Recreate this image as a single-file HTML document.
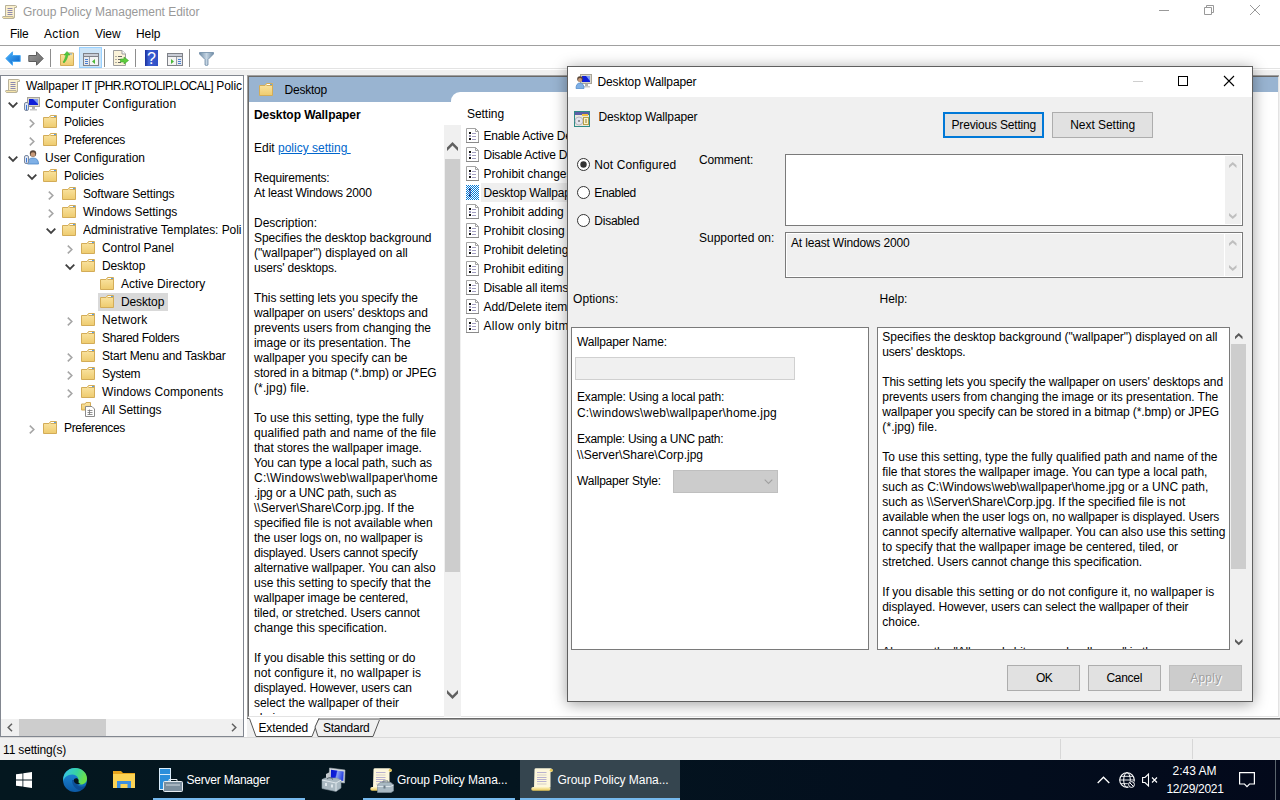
<!DOCTYPE html><html><head><meta charset="utf-8"><title>Group Policy Management Editor</title><style>
*{box-sizing:border-box;margin:0;padding:0}
html,body{width:1280px;height:800px;overflow:hidden;background:#fff}
body{font-family:"Liberation Sans",sans-serif;font-size:12px;color:#000;position:relative}
.a{position:absolute}
.t{position:absolute;white-space:nowrap;line-height:18px;height:18px}
.p{position:absolute;line-height:15px}
svg{position:absolute;overflow:visible}
</style></head><body>
<svg width="0" height="0" style="left:0;top:0"><defs>
<linearGradient id="fg" x1="0" y1="0" x2="0" y2="1"><stop offset="0" stop-color="#fbe6a6"/><stop offset="1" stop-color="#eecb6e"/></linearGradient>
<symbol id="folder" viewBox="0 0 14 13"><path d="M0.5 2.5 H6 L7.5 0.5 H13.5 V12.5 H0.5 Z" fill="url(#fg)" stroke="#d3ac58" stroke-width="1"/><path d="M7.5 2.5 H13" stroke="#d3ac58" fill="none"/><rect x="8" y="1" width="3" height="1" fill="#fff"/><rect x="11" y="1" width="2" height="1" fill="#5aa0e6"/></symbol>
<symbol id="scroll" viewBox="0 0 16 16"><path d="M3.5 1.5 H13.5 Q15 1.5 14.5 3.5 H12.5 V13 Q12.5 14.5 11 14.5 H1.5 Q0.5 14.5 0.8 12.5 H3.5 Z" fill="#fbf0cc" stroke="#b9b29a" stroke-width="1"/><path d="M1 12.5 H11 Q11.5 13.5 11 14.5 H1.5" fill="#f6e4a8" stroke="#b9b29a"/><path d="M5.5 4.5H10.5M5.5 6.5H10.5M5.5 8.5H10.5M5.5 10.5H10.5" stroke="#8d89b0"/></symbol>
<linearGradient id="rl" x1="0" y1="0" x2="0" y2="1"><stop offset="0" stop-color="#fff6c8"/><stop offset="1" stop-color="#e6c655"/></linearGradient>
<symbol id="scrollbig" viewBox="0 0 22 23"><path d="M3.500 1.500 Q3.500 0.300 5 0.300 H19.500 Q21.800 0.500 21.700 2.500 Q21.600 4.300 19.500 4.300 V19.500 H3 Z" fill="#fdf7dc"/><circle cx="20.300" cy="2.300" r="1.500" fill="#e6c655"/><rect x="0.300" y="19" width="19.200" height="3.700" rx="1.700" fill="url(#rl)"/><path d="M6 4.500H15.500M6 9.500H15.500M6 11.500H15.500M6 13.500H15.500" stroke="#b9b2cf"/><path d="M6 6.500H15.500M6 7.500H15.500M6 15.500H15.500M6 16.500H15.500" stroke="#e9e3d2"/></symbol>
<symbol id="setting" viewBox="0 0 13 15"><path d="M0.5 0.5 H9.5 L12.5 3.5 V14.5 H0.5 Z" fill="#fff" stroke="#a3a3a3"/><path d="M9.5 0.5 V3.5 H12.5" fill="none" stroke="#a3a3a3"/><path d="M0 14.5 H13" stroke="#8a8a8a"/><rect x="3" y="4" width="2" height="2" fill="#111"/><rect x="3" y="7" width="2" height="2" fill="#9a97b8"/><rect x="3" y="10" width="2" height="2" fill="#111"/><path d="M6 5.5H10M6 8.5H10M6 11.5H10" stroke="#a29ec2"/></symbol>
</defs></svg>
<svg style="left:2px;top:4px" width="16" height="16"><use href="#scroll"/></svg>
<div class="t" style="left:23px;top:3px;letter-spacing:-0.009px;color:#999">Group Policy Management Editor</div>
<svg style="left:1159px;top:10px" width="10" height="1"><rect width="10" height="1" fill="#999"/></svg>
<svg style="left:1204px;top:5px" width="10" height="10" viewBox="0 0 10 10"><path d="M0.5 2.5H7.5V9.5H0.5Z M2.5 2.5V0.5H9.5V7.5H7.5" fill="none" stroke="#999"/></svg>
<svg style="left:1250px;top:5px" width="10" height="10" viewBox="0 0 10 10"><path d="M0 0L10 10M10 0L0 10" stroke="#999" stroke-width="1"/></svg>
<div class="t" style="left:10px;top:25px;letter-spacing:-0.211px;">File</div>
<div class="t" style="left:44px;top:25px;letter-spacing:0.357px;">Action</div>
<div class="t" style="left:95px;top:25px;letter-spacing:-0.074px;">View</div>
<div class="t" style="left:136px;top:25px;letter-spacing:-0.047px;">Help</div>
<div class="a" style="left:0px;top:45px;width:1280px;height:1px;background:#a0a0a0;"></div>
<div class="a" style="left:0px;top:69px;width:1280px;height:7px;background:#f0f0f0;"></div>
<div class="a" style="left:0px;top:69px;width:1280px;height:1px;background:#fff;"></div>
<div class="a" style="left:0px;top:68px;width:1280px;height:1px;background:#e3e3e3;"></div>
<svg style="left:5px;top:51px" width="16" height="15" viewBox="0 0 16 15"><defs><linearGradient id="bl" x1="0" y1="0" x2="1" y2="1"><stop offset="0" stop-color="#49b6ff"/><stop offset="1" stop-color="#0a5ec4"/></linearGradient><linearGradient id="gr" x1="0" y1="0" x2="1" y2="1"><stop offset="0" stop-color="#9a9a9a"/><stop offset="1" stop-color="#6a6a6a"/></linearGradient></defs><path d="M7.5 0.8 L0.8 7.5 L7.5 14.2 V10.5 H15.2 V4.5 H7.5 Z" fill="url(#bl)" stroke="#4aa8f2" stroke-width="1"/></svg>
<svg style="left:28px;top:51px" width="16" height="15" viewBox="0 0 16 15"><path d="M8.5 0.8 L15.2 7.5 L8.5 14.2 V10.5 H0.8 V4.5 H8.5 Z" fill="url(#gr)" stroke="#5c5c5c" stroke-width="1"/></svg>
<div class="a" style="left:50px;top:49px;width:1px;height:18px;background:#8d8d8d;"></div>
<div class="a" style="left:104px;top:49px;width:1px;height:18px;background:#8d8d8d;"></div>
<div class="a" style="left:135px;top:49px;width:1px;height:18px;background:#8d8d8d;"></div>
<div class="a" style="left:189px;top:49px;width:1px;height:18px;background:#8d8d8d;"></div>
<svg style="left:60px;top:51px" width="15" height="15" viewBox="0 0 15 15"><path d="M0.5 3.5 H6 L7.5 2 H13.5 V14.5 H0.5 Z" fill="url(#fg)" stroke="#d3ac58"/><rect x="9" y="2.5" width="3" height="1" fill="#6aa8e8"/><path d="M3 11 C5 9 5 6 6 4 L4 4 L7 0.5 L10 4 L8 4 C7.5 7 6 10 4 12 Z" fill="#4fc83c" stroke="#3aa82a" stroke-width="0.5"/></svg>
<div class="a" style="left:79px;top:47px;width:23px;height:21px;background:#cce4f7;border:1px solid #99d1ff"></div>
<svg style="left:83px;top:53px" width="16" height="13" viewBox="0 0 16 13"><rect x="0.5" y="0.5" width="15" height="12" fill="#f4f4f4" stroke="#7f8289"/><rect x="1" y="1" width="14" height="2" fill="#c9cdd6"/><path d="M1 3.5H15" stroke="#7f8289"/><rect x="1" y="4" width="5" height="8" fill="#e6e9ef"/><path d="M6.5 4V12" stroke="#9a9da5"/><path d="M2 6.5H5M2 8.5H5M2 10.5H5" stroke="#4a7fd0"/><path d="M12 6 L9 8.5 L12 11 Z" fill="#4ab83a"/></svg>
<svg style="left:113px;top:50px" width="16" height="16" viewBox="0 0 16 16"><path d="M0.5 0.5 H9 L12.5 4 V15.5 H0.5 Z" fill="#fbf3d9" stroke="#9d9d9d"/><path d="M9 0.5 V4 H12.5" fill="#fff" stroke="#9d9d9d"/><path d="M2.5 6.5H3.5M5 6.5H9M2.5 9.5H3.5M5 9.5H8M2.5 12.5H3.5M5 12.5H8" stroke="#666"/><path d="M7.5 9 H11 V7 L15.5 10.5 L11 14 V12 H7.5 Z" fill="#5ccc3c" stroke="#3da62a" stroke-width="0.6"/></svg>
<svg style="left:145px;top:50px" width="13" height="16" viewBox="0 0 13 16"><defs><linearGradient id="hb" x1="0" y1="0" x2="1" y2="0"><stop offset="0" stop-color="#1a2f9c"/><stop offset="0.3" stop-color="#3c5fd4"/><stop offset="1" stop-color="#2f4fc4"/></linearGradient></defs><rect x="0" y="0" width="13" height="16" fill="url(#hb)"/><text x="6.500" y="13.500" font-size="16" fill="#fff" text-anchor="middle" font-family="Liberation Sans, sans-serif">?</text></svg>
<svg style="left:167px;top:53px" width="16" height="13" viewBox="0 0 16 13"><rect x="0.5" y="0.5" width="15" height="12" fill="#f4f4f4" stroke="#7f8289"/><rect x="1" y="1" width="14" height="2" fill="#c9cdd6"/><path d="M1 3.5H15" stroke="#7f8289"/><rect x="10" y="4" width="5" height="8" fill="#e6e9ef"/><path d="M9.5 4V12" stroke="#9a9da5"/><path d="M11 6.5H14M11 8.5H14M11 10.5H14" stroke="#4a7fd0"/><path d="M4 6 L7 8.5 L4 11 Z" fill="#4ab83a"/></svg>
<svg style="left:199px;top:52px" width="15" height="14" viewBox="0 0 15 14"><defs><linearGradient id="fl" x1="0" y1="0" x2="1" y2="0"><stop offset="0" stop-color="#6f8ca6"/><stop offset="0.5" stop-color="#c5d5e3"/><stop offset="1" stop-color="#6f8ca6"/></linearGradient></defs><path d="M0.5 0.5 H14.5 V2 L9 7.5 V13 Q7.5 14 6 13 V7.5 L0.5 2 Z" fill="url(#fl)" stroke="#6f8ca6" stroke-width="0.8"/></svg>
<div class="a" style="left:0px;top:75px;width:244px;height:662px;background:#fff;border:1px solid #828790"></div>
<svg style="left:5px;top:78px" width="16" height="16"><use href="#scroll"/></svg>
<div class="t" style="left:26px;top:77px;letter-spacing:-0.140px;">Wallpaper IT</div>
<div class="t" style="left:94.5px;top:77px;letter-spacing:-0.549px;">[PHR.ROTOLIP.LOCAL]</div>
<div class="t" style="left:216.2px;top:77px;letter-spacing:-0.023px;">Polic</div>
<svg style="left:8px;top:102px" width="10" height="6" viewBox="0 0 10 6"><path d="M0.7 0.7 L5 5 L9.3 0.7" fill="none" stroke="#404040" stroke-width="1.8"/></svg>
<svg style="left:24px;top:97px" width="16" height="15" viewBox="0 0 16 15"><rect x="3.5" y="0.5" width="12" height="9" fill="#d9d6cc" stroke="#a8a498"/><rect x="5" y="2" width="9" height="6" fill="#1020d8"/><path d="M9 2 L14 2 L14 7 Z" fill="#7f9cf0"/><rect x="8" y="10" width="3" height="2" fill="#b0b0b0"/><rect x="6" y="12" width="7" height="1.5" fill="#c8c8c8"/><rect x="0.5" y="5.500" width="4" height="8" rx="1.5" fill="#dfe6f2" stroke="#7d8aa0"/><rect x="2" y="8" width="1" height="5" fill="#3b78d8"/></svg>
<div class="t" style="left:45px;top:95px;letter-spacing:0.177px;">Computer Configuration</div>
<svg style="left:29px;top:119px" width="6" height="9" viewBox="0 0 6 9"><path d="M0.800 0.600 L4.800 4.500 L0.800 8.400" fill="none" stroke="#a6a6a6" stroke-width="1.600"/></svg>
<svg style="left:43px;top:115px" width="14" height="13"><use href="#folder"/></svg>
<div class="t" style="left:64px;top:113px;letter-spacing:-0.182px;">Policies</div>
<svg style="left:29px;top:137px" width="6" height="9" viewBox="0 0 6 9"><path d="M0.800 0.600 L4.800 4.500 L0.800 8.400" fill="none" stroke="#a6a6a6" stroke-width="1.600"/></svg>
<svg style="left:43px;top:133px" width="14" height="13"><use href="#folder"/></svg>
<div class="t" style="left:64px;top:131px;letter-spacing:-0.337px;">Preferences</div>
<svg style="left:8px;top:156px" width="10" height="6" viewBox="0 0 10 6"><path d="M0.7 0.7 L5 5 L9.3 0.7" fill="none" stroke="#404040" stroke-width="1.8"/></svg>
<svg style="left:24px;top:149px" width="16" height="16" viewBox="0 0 16 16"><circle cx="9" cy="4.500" r="3.2" fill="#5a4638"/><circle cx="9" cy="5.500" r="2.300" fill="#c99a78"/><path d="M3.5 15 Q3.5 9 9 9 Q14.500 9 14.500 15 Z" fill="#7fb0e6" stroke="#4a86c8" stroke-width="0.8"/><rect x="0.5" y="6.500" width="4" height="8" rx="1.500" fill="#dfe6f2" stroke="#7d8aa0"/><rect x="2" y="9" width="1" height="4.500" fill="#3b78d8"/></svg>
<div class="t" style="left:45px;top:149px;letter-spacing:-0.003px;">User Configuration</div>
<svg style="left:27px;top:174px" width="10" height="6" viewBox="0 0 10 6"><path d="M0.7 0.7 L5 5 L9.3 0.7" fill="none" stroke="#404040" stroke-width="1.8"/></svg>
<svg style="left:43px;top:169px" width="14" height="13"><use href="#folder"/></svg>
<div class="t" style="left:64px;top:167px;letter-spacing:-0.182px;">Policies</div>
<svg style="left:48px;top:191px" width="6" height="9" viewBox="0 0 6 9"><path d="M0.800 0.600 L4.800 4.500 L0.800 8.400" fill="none" stroke="#a6a6a6" stroke-width="1.600"/></svg>
<svg style="left:62px;top:187px" width="14" height="13"><use href="#folder"/></svg>
<div class="t" style="left:83px;top:185px;letter-spacing:-0.162px;">Software Settings</div>
<svg style="left:48px;top:209px" width="6" height="9" viewBox="0 0 6 9"><path d="M0.800 0.600 L4.800 4.500 L0.800 8.400" fill="none" stroke="#a6a6a6" stroke-width="1.600"/></svg>
<svg style="left:62px;top:205px" width="14" height="13"><use href="#folder"/></svg>
<div class="t" style="left:83px;top:203px;letter-spacing:-0.067px;">Windows Settings</div>
<svg style="left:46px;top:228px" width="10" height="6" viewBox="0 0 10 6"><path d="M0.7 0.7 L5 5 L9.3 0.7" fill="none" stroke="#404040" stroke-width="1.8"/></svg>
<svg style="left:62px;top:223px" width="14" height="13"><use href="#folder"/></svg>
<div class="t" style="left:83px;top:221px;width:160px;overflow:hidden;letter-spacing:-0.045px;">Administrative Templates: Poli</div>
<svg style="left:67px;top:245px" width="6" height="9" viewBox="0 0 6 9"><path d="M0.800 0.600 L4.800 4.500 L0.800 8.400" fill="none" stroke="#a6a6a6" stroke-width="1.600"/></svg>
<svg style="left:81px;top:241px" width="14" height="13"><use href="#folder"/></svg>
<div class="t" style="left:102px;top:239px;letter-spacing:-0.063px;">Control Panel</div>
<svg style="left:65px;top:264px" width="10" height="6" viewBox="0 0 10 6"><path d="M0.7 0.7 L5 5 L9.3 0.7" fill="none" stroke="#404040" stroke-width="1.8"/></svg>
<svg style="left:81px;top:259px" width="14" height="13"><use href="#folder"/></svg>
<div class="t" style="left:102px;top:257px;letter-spacing:-0.119px;">Desktop</div>
<svg style="left:100px;top:277px" width="14" height="13"><use href="#folder"/></svg>
<div class="t" style="left:121px;top:275px;letter-spacing:0.011px;">Active Directory</div>
<div class="a" style="left:98px;top:293px;width:70px;height:18px;background:#d9d9d9;"></div>
<svg style="left:100px;top:295px" width="14" height="13"><use href="#folder"/></svg>
<div class="t" style="left:121px;top:293px;letter-spacing:-0.119px;">Desktop</div>
<svg style="left:67px;top:317px" width="6" height="9" viewBox="0 0 6 9"><path d="M0.800 0.600 L4.800 4.500 L0.800 8.400" fill="none" stroke="#a6a6a6" stroke-width="1.600"/></svg>
<svg style="left:81px;top:313px" width="14" height="13"><use href="#folder"/></svg>
<div class="t" style="left:102px;top:311px;letter-spacing:0.198px;">Network</div>
<svg style="left:81px;top:331px" width="14" height="13"><use href="#folder"/></svg>
<div class="t" style="left:102px;top:329px;letter-spacing:-0.343px;">Shared Folders</div>
<svg style="left:67px;top:353px" width="6" height="9" viewBox="0 0 6 9"><path d="M0.800 0.600 L4.800 4.500 L0.800 8.400" fill="none" stroke="#a6a6a6" stroke-width="1.600"/></svg>
<svg style="left:81px;top:349px" width="14" height="13"><use href="#folder"/></svg>
<div class="t" style="left:102px;top:347px;letter-spacing:-0.168px;">Start Menu and Taskbar</div>
<svg style="left:67px;top:371px" width="6" height="9" viewBox="0 0 6 9"><path d="M0.800 0.600 L4.800 4.500 L0.800 8.400" fill="none" stroke="#a6a6a6" stroke-width="1.600"/></svg>
<svg style="left:81px;top:367px" width="14" height="13"><use href="#folder"/></svg>
<div class="t" style="left:102px;top:365px;letter-spacing:-0.303px;">System</div>
<svg style="left:67px;top:389px" width="6" height="9" viewBox="0 0 6 9"><path d="M0.800 0.600 L4.800 4.500 L0.800 8.400" fill="none" stroke="#a6a6a6" stroke-width="1.600"/></svg>
<svg style="left:81px;top:385px" width="14" height="13"><use href="#folder"/></svg>
<div class="t" style="left:102px;top:383px;letter-spacing:0.069px;">Windows Components</div>
<svg style="left:81px;top:402px" width="16" height="15" viewBox="0 0 16 15"><path d="M0.5 2 H4 L5 0.5 H9.500 V8 H0.5 Z" fill="url(#fg)" stroke="#d3ac58"/><path d="M4.500 4.500 H11 L13.500 7 V14.500 H4.500 Z" fill="#fff" stroke="#8a8a8a"/><path d="M6.500 8.500H11.500M6.500 10.500H11.500M6.500 12.500H11.500M8.500 7.500V13" stroke="#777" stroke-width="0.8"/></svg>
<div class="t" style="left:102px;top:401px;letter-spacing:-0.044px;">All Settings</div>
<svg style="left:29px;top:425px" width="6" height="9" viewBox="0 0 6 9"><path d="M0.800 0.600 L4.800 4.500 L0.800 8.400" fill="none" stroke="#a6a6a6" stroke-width="1.600"/></svg>
<svg style="left:43px;top:421px" width="14" height="13"><use href="#folder"/></svg>
<div class="t" style="left:64px;top:419px;letter-spacing:-0.337px;">Preferences</div>
<div class="a" style="left:1px;top:719px;width:242px;height:17px;background:#f0f0f0;"></div>
<div class="a" style="left:19px;top:719px;width:87px;height:17px;background:#cdcdcd;"></div>
<svg style="left:7px;top:723px" width="6" height="9" viewBox="0 0 6 9"><path d="M5 0.7 L1.200 4.500 L5 8.300" fill="none" stroke="#606060" stroke-width="1.500"/></svg>
<svg style="left:231px;top:723px" width="6" height="9" viewBox="0 0 6 9"><path d="M1 0.7 L4.800 4.500 L1 8.300" fill="none" stroke="#606060" stroke-width="1.500"/></svg>
<div class="a" style="left:247px;top:75px;width:1033px;height:662px;background:#fff;border-left:1px solid #a0a0a0;border-top:1px solid #a0a0a0"></div>
<div class="a" style="left:248px;top:76px;width:1031px;height:641px;background:#fff;border-left:1px solid #696969;border-top:1px solid #696969;border-right:1px solid #e3e3e3;border-bottom:1px solid #e3e3e3"></div>
<div class="a" style="left:1279px;top:75px;width:1px;height:662px;background:#f0f0f0;"></div>
<div class="a" style="left:249px;top:77px;width:1029px;height:25px;background:#99b4d1;"></div>
<div class="a" style="left:451px;top:92px;width:827px;height:20px;background:#fff;border-top-left-radius:9px"></div>
<svg style="left:259px;top:83px" width="14" height="13"><use href="#folder"/></svg>
<div class="t" style="left:284.5px;top:81px;letter-spacing:-0.219px;">Desktop</div>
<div class="t" style="left:254px;top:106px;letter-spacing:-0.063px;font-weight:bold">Desktop Wallpaper</div>
<div class="a" style="left:249px;top:102px;width:195px;height:613px;overflow:hidden">
<div class="t" style="left:5px;top:37px;letter-spacing:-0.001px;">Edit <span style="color:#0066cc;text-decoration:underline">policy setting&nbsp;</span></div>
<div class="t" style="left:5px;top:67px;letter-spacing:-0.196px;">Requirements:</div>
<div class="t" style="left:5px;top:82px;letter-spacing:-0.208px;">At least Windows 2000</div>
<div class="t" style="left:5px;top:112px;letter-spacing:-0.030px;">Description:</div>
<div class="t" style="left:5px;top:127px;letter-spacing:-0.085px;">Specifies the desktop background</div>
<div class="t" style="left:5px;top:142px;letter-spacing:-0.005px;">("wallpaper") displayed on all</div>
<div class="t" style="left:5px;top:157px;letter-spacing:-0.215px;">users' desktops.</div>
<div class="t" style="left:5px;top:187px;letter-spacing:-0.086px;">This setting lets you specify the</div>
<div class="t" style="left:5px;top:202px;letter-spacing:-0.126px;">wallpaper on users' desktops and</div>
<div class="t" style="left:5px;top:217px;letter-spacing:-0.035px;">prevents users from changing the</div>
<div class="t" style="left:5px;top:232px;letter-spacing:-0.068px;">image or its presentation. The</div>
<div class="t" style="left:5px;top:247px;letter-spacing:-0.021px;">wallpaper you specify can be</div>
<div class="t" style="left:5px;top:262px;letter-spacing:-0.125px;">stored in a bitmap (*.bmp) or JPEG</div>
<div class="t" style="left:5px;top:277px;letter-spacing:0.113px;">(*.jpg) file.</div>
<div class="t" style="left:5px;top:307px;letter-spacing:-0.014px;">To use this setting, type the fully</div>
<div class="t" style="left:5px;top:322px;letter-spacing:0.062px;">qualified path and name of the file</div>
<div class="t" style="left:5px;top:337px;letter-spacing:-0.069px;">that stores the wallpaper image.</div>
<div class="t" style="left:5px;top:352px;letter-spacing:-0.108px;">You can type a local path, such as</div>
<div class="t" style="left:5px;top:367px;letter-spacing:0.227px;">C:\Windows\web\wallpaper\home</div>
<div class="t" style="left:5px;top:382px;letter-spacing:-0.185px;">.jpg or a UNC path, such as</div>
<div class="t" style="left:5px;top:397px;letter-spacing:0.025px;">\\Server\Share\Corp.jpg. If the</div>
<div class="t" style="left:5px;top:412px;letter-spacing:-0.063px;">specified file is not available when</div>
<div class="t" style="left:5px;top:427px;letter-spacing:-0.103px;">the user logs on, no wallpaper is</div>
<div class="t" style="left:5px;top:442px;letter-spacing:-0.166px;">displayed. Users cannot specify</div>
<div class="t" style="left:5px;top:457px;letter-spacing:-0.075px;">alternative wallpaper. You can also</div>
<div class="t" style="left:5px;top:472px;letter-spacing:-0.018px;">use this setting to specify that the</div>
<div class="t" style="left:5px;top:487px;letter-spacing:-0.112px;">wallpaper image be centered,</div>
<div class="t" style="left:5px;top:502px;letter-spacing:-0.110px;">tiled, or stretched. Users cannot</div>
<div class="t" style="left:5px;top:517px;letter-spacing:-0.042px;">change this specification.</div>
<div class="t" style="left:5px;top:547px;letter-spacing:-0.018px;">If you disable this setting or do</div>
<div class="t" style="left:5px;top:562px;letter-spacing:0.047px;">not configure it, no wallpaper is</div>
<div class="t" style="left:5px;top:577px;letter-spacing:-0.174px;">displayed. However, users can</div>
<div class="t" style="left:5px;top:592px;letter-spacing:-0.038px;">select the wallpaper of their</div>
<div class="t" style="left:5px;top:607px;letter-spacing:-0.290px;">choice.</div>
</div>
<div class="a" style="left:444px;top:125px;width:17px;height:592px;background:#f0f0f0;"></div>
<div class="a" style="left:445px;top:159px;width:15px;height:413px;background:#cdcdcd;"></div>
<svg style="left:447px;top:142px" width="11" height="9" viewBox="0 0 11 9"><polygon points="0,5.5 5.5,0 11,5.5 11,9 5.5,3.5 0,9" fill="#606060"/></svg>
<svg style="left:447px;top:689.5px" width="11" height="9" viewBox="0 0 11 9"><polygon points="0,0 5.5,5.5 11,0 11,3.5 5.5,9 0,3.5" fill="#606060"/></svg>
<div class="t" style="left:467px;top:105px;letter-spacing:-0.051px;">Setting</div>
<svg width="0" height="0" style="left:0;top:0"><defs><pattern id="chk" width="2" height="2" patternUnits="userSpaceOnUse"><rect width="2" height="2" fill="#fff"/><rect width="1" height="1" fill="#0078d7"/><rect x="1" y="1" width="1" height="1" fill="#0078d7"/></pattern></defs></svg>
<svg style="left:466px;top:128px" width="13" height="15"><use href="#setting"/></svg>
<div class="t" style="left:483.5px;top:127px;line-height:19px;height:19px;letter-spacing:-0.198px;">Enable Active Desktop</div>
<svg style="left:466px;top:147px" width="13" height="15"><use href="#setting"/></svg>
<div class="t" style="left:483.5px;top:146px;line-height:19px;height:19px;letter-spacing:-0.233px;">Disable Active Desktop</div>
<svg style="left:466px;top:166px" width="13" height="15"><use href="#setting"/></svg>
<div class="t" style="left:483.5px;top:165px;line-height:19px;height:19px;letter-spacing:-0.026px;">Prohibit changes</div>
<div class="a" style="left:481px;top:183px;width:700px;height:19px;background:#efefef;"></div>
<svg style="left:466px;top:185px" width="13" height="15" viewBox="0 0 13 15"><rect width="13" height="15" fill="url(#chk)"/><path d="M3 4.500H5M3 10.500H5" stroke="#0a2a7a" stroke-width="2"/><path d="M3 7.500H5" stroke="#4a5aa8" stroke-width="2"/></svg>
<div class="t" style="left:483.5px;top:184px;line-height:19px;height:19px;letter-spacing:-0.203px;">Desktop Wallpaper</div>
<svg style="left:466px;top:204px" width="13" height="15"><use href="#setting"/></svg>
<div class="t" style="left:483.5px;top:203px;line-height:19px;height:19px;letter-spacing:0.013px;">Prohibit adding items</div>
<svg style="left:466px;top:223px" width="13" height="15"><use href="#setting"/></svg>
<div class="t" style="left:483.5px;top:222px;line-height:19px;height:19px;letter-spacing:-0.008px;">Prohibit closing items</div>
<svg style="left:466px;top:242px" width="13" height="15"><use href="#setting"/></svg>
<div class="t" style="left:483.5px;top:241px;line-height:19px;height:19px;letter-spacing:-0.077px;">Prohibit deleting items</div>
<svg style="left:466px;top:261px" width="13" height="15"><use href="#setting"/></svg>
<div class="t" style="left:483.5px;top:260px;line-height:19px;height:19px;letter-spacing:0.054px;">Prohibit editing items</div>
<svg style="left:466px;top:280px" width="13" height="15"><use href="#setting"/></svg>
<div class="t" style="left:483.5px;top:279px;line-height:19px;height:19px;letter-spacing:-0.154px;">Disable all items</div>
<svg style="left:466px;top:299px" width="13" height="15"><use href="#setting"/></svg>
<div class="t" style="left:483.5px;top:298px;line-height:19px;height:19px;letter-spacing:-0.109px;">Add/Delete items</div>
<svg style="left:466px;top:318px" width="13" height="15"><use href="#setting"/></svg>
<div class="t" style="left:483.5px;top:317px;line-height:19px;height:19px;letter-spacing:0.348px;">Allow only bitmapped wallpaper</div>
<div class="a" style="left:247px;top:718px;width:1033px;height:19px;background:#f0f0f0;"></div>
<div class="a" style="left:247px;top:718px;width:1033px;height:1px;background:#696969;"></div>
<svg style="left:249px;top:718px" width="135" height="19" viewBox="0 0 135 19"><path d="M0 0 H70 L63 18.500 H7 Z" fill="#fff"/><path d="M0.500 0.500 L7 18.500 H63 L70 0.500" fill="none" stroke="#555"/><path d="M70 0.500 L66 9 L69 18.500 H124 L131 0.500" fill="#f0f0f0" stroke="#555"/></svg>
<div class="a" style="left:319px;top:719px;width:961px;height:1px;background:#a0a0a0;"></div>
<div class="t" style="left:258.5px;top:719px;letter-spacing:-0.152px;">Extended</div>
<div class="t" style="left:323px;top:719px;letter-spacing:-0.275px;">Standard</div>
<div class="a" style="left:0px;top:737px;width:1280px;height:23px;background:#f0f0f0;"></div>
<div class="t" style="left:3px;top:741px;letter-spacing:-0.157px;">11 setting(s)</div>
<div class="a" style="left:0px;top:737px;width:1280px;height:1px;background:#dadada;"></div>
<div class="a" style="left:1060px;top:739px;width:1px;height:20px;background:#d7d7d7;"></div>
<div class="a" style="left:1192px;top:739px;width:1px;height:20px;background:#d7d7d7;"></div>
<div class="a" style="left:567px;top:66px;width:686px;height:636px;background:#f0f0f0;border:1px solid #5f5f5f;box-shadow:0 2px 14px rgba(0,0,0,0.38)">
<div class="a" style="left:0px;top:0px;width:684px;height:30px;background:#fff;"></div>
<svg style="left:8px;top:7px" width="16" height="15" viewBox="0 0 16 15"><rect x="4.500" y="0.500" width="11" height="9" fill="#d9d6cc" stroke="#a8a498"/><rect x="6" y="2" width="8" height="6" fill="#1020d8"/><path d="M10 2 L14 2 L14 7 Z" fill="#7f9cf0"/><rect x="9" y="10" width="3" height="2" fill="#b0b0b0"/><rect x="7" y="12" width="7" height="1.500" fill="#c8c8c8"/><circle cx="4" cy="5" r="2.800" fill="#5a4638"/><circle cx="4" cy="6" r="2" fill="#c99a78"/><path d="M0 14.500 Q0 9 4 9 Q8 9 8 14.500 Z" fill="#7fb0e6" stroke="#4a86c8" stroke-width="0.700"/></svg>
<div class="t" style="left:29.5px;top:6px;letter-spacing:-0.114px;">Desktop Wallpaper</div>
<svg style="left:565px;top:14px" width="10" height="1"><rect width="10" height="1" fill="#cfcfcf"/></svg>
<svg style="left:610px;top:9px" width="10" height="10" viewBox="0 0 10 10"><rect x="0.500" y="0.500" width="9" height="9" fill="none" stroke="#000"/></svg>
<svg style="left:656px;top:9px" width="10" height="10" viewBox="0 0 10 10"><path d="M0 0L10 10M10 0L0 10" stroke="#000" stroke-width="1.100"/></svg>
<svg style="left:6px;top:44px" width="16" height="16" viewBox="0 0 16 16"><rect x="0.500" y="0.500" width="15" height="15" fill="#e9e7dc" stroke="#2f8a86"/><rect x="1" y="1" width="14" height="3" fill="#5b5ea6"/><rect x="8" y="3" width="6" height="2" fill="#f0c040"/><circle cx="5" cy="10" r="4" fill="#e4e4ec" stroke="#9a9aa8" stroke-width="0.600"/><circle cx="5" cy="10" r="1" fill="#777"/><rect x="9.500" y="6.500" width="5" height="7" fill="#fdf3c8" stroke="#b9a24a"/><path d="M11 9H13M11 11H13" stroke="#8a7a3a"/></svg>
<div class="t" style="left:30.5px;top:41px;letter-spacing:-0.114px;">Desktop Wallpaper</div>
<div class="a" style="left:375px;top:45px;width:101px;height:26px;background:#e1e1e1;border:2px solid #0078d7"></div>
<div class="t" style="left:383.5px;top:49px;letter-spacing:-0.174px;">Previous Setting</div>
<div class="a" style="left:484px;top:45px;width:101px;height:26px;background:#e1e1e1;border:1px solid #adadad"></div>
<div class="t" style="left:502.20000000000005px;top:49px;letter-spacing:-0.040px;">Next Setting</div>
<svg style="left:9px;top:91px" width="13" height="13" viewBox="0 0 13 13"><circle cx="6.500" cy="6.500" r="6" fill="#fff" stroke="#333"/><circle cx="6.500" cy="6.500" r="3.200" fill="#333"/></svg>
<div class="t" style="left:26.299999999999955px;top:89px;letter-spacing:0.084px;">Not Configured</div>
<svg style="left:9px;top:119px" width="13" height="13" viewBox="0 0 13 13"><circle cx="6.500" cy="6.500" r="6" fill="#fff" stroke="#333"/></svg>
<div class="t" style="left:26.299999999999955px;top:117px;letter-spacing:-0.350px;">Enabled</div>
<svg style="left:9px;top:147px" width="13" height="13" viewBox="0 0 13 13"><circle cx="6.500" cy="6.500" r="6" fill="#fff" stroke="#333"/></svg>
<div class="t" style="left:26.299999999999955px;top:145px;letter-spacing:-0.238px;">Disabled</div>
<div class="t" style="left:131px;top:84px;letter-spacing:-0.157px;">Comment:</div>
<div class="a" style="left:217px;top:87px;width:458px;height:72px;background:#fff;border:1px solid #7a7a7a"></div>
<div class="a" style="left:657px;top:89px;width:16px;height:68px;background:#f0f0f0;"></div>
<svg style="left:660.8px;top:95px" width="7.5" height="6" viewBox="0 0 7.5 6"><polygon points="0,3.3 3.75,0 7.5,3.3 7.5,6 3.75,2.7 0,6" fill="#bfbfbf"/></svg>
<svg style="left:660.8px;top:146px" width="7.5" height="6" viewBox="0 0 7.5 6"><polygon points="0,0 3.75,3.3 7.5,0 7.5,2.7 3.75,6 0,2.7" fill="#bfbfbf"/></svg>
<div class="t" style="left:131px;top:162px;letter-spacing:-0.008px;">Supported on:</div>
<div class="a" style="left:217px;top:165px;width:458px;height:46px;background:#f0f0f0;border:1px solid #7a7a7a;box-shadow:inset 0 0 0 1px #fff"></div>
<div class="a" style="left:656px;top:166px;width:1px;height:44px;background:#fff;"></div>
<svg style="left:660.8px;top:172.8px" width="7.5" height="6" viewBox="0 0 7.5 6"><polygon points="0,3.3 3.75,0 7.5,3.3 7.5,6 3.75,2.7 0,6" fill="#bfbfbf"/></svg>
<svg style="left:660.8px;top:197.8px" width="7.5" height="6" viewBox="0 0 7.5 6"><polygon points="0,0 3.75,3.3 7.5,0 7.5,2.7 3.75,6 0,2.7" fill="#bfbfbf"/></svg>
<div class="t" style="left:223px;top:167px;letter-spacing:-0.170px;">At least Windows 2000</div>
<div class="t" style="left:5px;top:223px;letter-spacing:0.075px;">Options:</div>
<div class="t" style="left:311.5px;top:223px;letter-spacing:-0.023px;">Help:</div>
<div class="a" style="left:3px;top:260px;width:298px;height:323px;background:#fff;border:1px solid #7a7a7a"></div>
<div class="t" style="left:9px;top:266px;letter-spacing:-0.158px;">Wallpaper Name:</div>
<div class="a" style="left:7px;top:290px;width:220px;height:23px;background:#f0f0f0;border:1px solid #d0d0d0"></div>
<div class="t" style="left:9px;top:321px;letter-spacing:-0.178px;">Example: Using a local path:</div>
<div class="t" style="left:9px;top:337px;letter-spacing:0.175px;">C:\windows\web\wallpaper\home.jpg</div>
<div class="t" style="left:9px;top:363px;letter-spacing:-0.273px;">Example: Using a UNC path:</div>
<div class="t" style="left:9px;top:379px;letter-spacing:-0.003px;">\\Server\Share\Corp.jpg</div>
<div class="t" style="left:9px;top:405px;letter-spacing:-0.190px;">Wallpaper Style:</div>
<div class="a" style="left:105px;top:403px;width:105px;height:23px;background:#cccccc;border:1px solid #bfbfbf"></div>
<svg style="left:196px;top:412px" width="9" height="6" viewBox="0 0 9 6"><path d="M0.700 0.700 L4.500 4.500 L8.300 0.700" fill="none" stroke="#a0a0a0" stroke-width="1.100"/></svg>
<div class="a" style="left:309px;top:260px;width:353px;height:323px;background:#fff;border:1px solid #7a7a7a"></div>
<div class="a" style="left:310px;top:261px;width:351px;height:321px;overflow:hidden">
<div class="t" style="left:4.300px;top:0px;letter-spacing:-0.035px;">Specifies the desktop background (&quot;wallpaper&quot;) displayed on all</div>
<div class="t" style="left:4.300px;top:15px;letter-spacing:-0.196px;">users&#x27; desktops.</div>
<div class="t" style="left:4.300px;top:45px;letter-spacing:-0.108px;">This setting lets you specify the wallpaper on users&#x27; desktops and</div>
<div class="t" style="left:4.300px;top:60px;letter-spacing:-0.066px;">prevents users from changing the image or its presentation. The</div>
<div class="t" style="left:4.300px;top:75px;letter-spacing:-0.117px;">wallpaper you specify can be stored in a bitmap (*.bmp) or JPEG</div>
<div class="t" style="left:4.300px;top:90px;letter-spacing:0.090px;">(*.jpg) file.</div>
<div class="t" style="left:4.300px;top:120px;letter-spacing:0.005px;">To use this setting, type the fully qualified path and name of the</div>
<div class="t" style="left:4.300px;top:135px;letter-spacing:-0.061px;">file that stores the wallpaper image. You can type a local path,</div>
<div class="t" style="left:4.300px;top:150px;letter-spacing:0.021px;">such as C:\Windows\web\wallpaper\home.jpg or a UNC path,</div>
<div class="t" style="left:4.300px;top:165px;letter-spacing:-0.041px;">such as \\Server\Share\Corp.jpg. If the specified file is not</div>
<div class="t" style="left:4.300px;top:180px;letter-spacing:-0.155px;">available when the user logs on, no wallpaper is displayed. Users</div>
<div class="t" style="left:4.300px;top:195px;letter-spacing:-0.068px;">cannot specify alternative wallpaper. You can also use this setting</div>
<div class="t" style="left:4.300px;top:210px;letter-spacing:-0.030px;">to specify that the wallpaper image be centered, tiled, or</div>
<div class="t" style="left:4.300px;top:225px;letter-spacing:-0.089px;">stretched. Users cannot change this specification.</div>
<div class="t" style="left:4.300px;top:255px;letter-spacing:0.016px;">If you disable this setting or do not configure it, no wallpaper is</div>
<div class="t" style="left:4.300px;top:270px;letter-spacing:-0.101px;">displayed. However, users can select the wallpaper of their</div>
<div class="t" style="left:4.300px;top:285px;letter-spacing:-0.019px;">choice.</div>
<div class="t" style="left:4.300px;top:315px;letter-spacing:-0.112px;">Also, see the &quot;Allow only bitmapped wallpaper&quot; in the same</div>
</div>
<div class="a" style="left:663px;top:261px;width:17px;height:322px;background:#f0f0f0;"></div>
<div class="a" style="left:663px;top:277px;width:15px;height:225px;background:#cdcdcd;"></div>
<svg style="left:666.8px;top:266px" width="7.5" height="6.2" viewBox="0 0 7.5 6.2"><polygon points="0,3.4000000000000004 3.75,0 7.5,3.4000000000000004 7.5,6.2 3.75,2.8 0,6.2" fill="#5a5a5a"/></svg>
<svg style="left:666.8px;top:571.8px" width="7.5" height="6.2" viewBox="0 0 7.5 6.2"><polygon points="0,0 3.75,3.4000000000000004 7.5,0 7.5,2.8 3.75,6.2 0,2.8" fill="#5a5a5a"/></svg>
<div class="a" style="left:439px;top:598px;width:73px;height:26px;background:#e1e1e1;border:1px solid #adadad"></div>
<div class="t" style="left:468px;top:602px;letter-spacing:-0.472px;">OK</div>
<div class="a" style="left:520px;top:598px;width:73px;height:26px;background:#e1e1e1;border:1px solid #adadad"></div>
<div class="t" style="left:538.5px;top:602px;letter-spacing:-0.310px;">Cancel</div>
<div class="a" style="left:601px;top:598px;width:73px;height:26px;background:#cccccc;border:1px solid #bfbfbf"></div>
<div class="t" style="left:622.2px;top:602px;letter-spacing:0.234px;color:#a0a0a0;text-shadow:1px 1px 0 #fff">Apply</div>
</div>
<div class="a" style="left:0px;top:760px;width:1280px;height:40px;background:linear-gradient(90deg,#04171f 0%,#04151f 40%,#030f1e 70%,#03091b 100%);"></div>
<svg style="left:16px;top:772px" width="16" height="16" viewBox="0 0 16 16"><path d="M0 2.300 L6.500 1.400 V7.600 H0 Z M7.300 1.300 L16 0 V7.600 H7.300 Z M0 8.400 H6.500 V14.600 L0 13.700 Z M7.300 8.400 H16 V16 L7.300 14.700 Z" fill="#fff"/></svg>
<svg style="left:63px;top:768px" width="24" height="24" viewBox="0 0 24 24"><defs><linearGradient id="e1" x1="0" y1="0" x2="1" y2="0.300"><stop offset="0" stop-color="#35c1f1"/><stop offset="0.600" stop-color="#38d39f"/><stop offset="1" stop-color="#6be04a"/></linearGradient><linearGradient id="e2" x1="0" y1="0" x2="0" y2="1"><stop offset="0" stop-color="#1e8fe0"/><stop offset="1" stop-color="#0c59a4"/></linearGradient></defs><circle cx="12" cy="12" r="12" fill="url(#e2)"/><path d="M0.300 10 C1.500 3 7 0 12 0 C19 0 24 5 24 10.500 C24 14 21.500 16.500 18 16.500 C15 16.500 13.500 15.500 14 14 C15 13 15.500 11.500 15 10 C14 7 10 5.500 6 7 C3 8 1 10 0.300 13 Z" fill="url(#e1)"/><path d="M9 12 C9 17 12 21 17 22.500 C20 22 22.500 19.500 23 17.500 C20 19.500 15 19 13.500 15.500 C13 14 13.300 13 14 12 Z" fill="#0a3f86" opacity="0.600"/><path d="M10.800 12.300 C10.800 9.800 15 9.600 15.600 12 C16 14 14.500 15 17.500 15.300 C14.500 17.300 10.800 15.500 10.800 12.300 Z" fill="#04161f"/></svg>
<svg style="left:113px;top:770px" width="22" height="19" viewBox="0 0 22 19"><path d="M0 1 H8 L10 3 H22 V18 H0 Z" fill="#e8a51c"/><rect x="0" y="4" width="22" height="14" fill="#fcd354"/><path d="M4 18 V11 H18 V18 H14.500 V14 H7.500 V18 Z" fill="#3d8fe0"/></svg>
<svg style="left:159px;top:768px" width="25" height="24" viewBox="0 0 25 24"><rect x="0.500" y="0.500" width="11" height="21" fill="#2b8fdb" stroke="#d9ecfa" stroke-width="1"/><path d="M1 6.500H11" stroke="#d9ecfa"/><rect x="4.500" y="13.500" width="19" height="10" rx="1" fill="#7b8f9e" stroke="#e8eef2" stroke-width="1"/><path d="M10 13 V11.500 H18 V13" fill="none" stroke="#e8eef2"/><path d="M7 17H21" stroke="#e8eef2" stroke-width="0.800"/></svg>
<div class="t" style="left:186.5px;top:771px;letter-spacing:-0.218px;color:#fff">Server Manager</div>
<div class="a" style="left:153px;top:798px;width:152px;height:2px;background:#76b9ed;"></div>
<svg style="left:321px;top:767px" width="25" height="25" viewBox="0 0 25 25"><defs><linearGradient id="scr" x1="0" y1="0" x2="1" y2="0.200"><stop offset="0" stop-color="#0818d0"/><stop offset="0.450" stop-color="#1020d8"/><stop offset="0.550" stop-color="#8aa0f4"/><stop offset="1" stop-color="#2a44e0"/></linearGradient></defs><path d="M5 7 L9 5 V14 L5 15 Z" fill="#c5cbd0"/><path d="M8.500 1 L24 3 L23.500 16 L8 13.500 Z" fill="#d5dade" stroke="#a9b2b8" stroke-width="0.600"/><path d="M10 2.800 L22.700 4.500 L22.300 14 L9.700 12 Z" fill="url(#scr)"/><path d="M1 12.500 L4 11 H16 L20 13 V21 L15 24.500 L1 21.500 Z" fill="#aab9c2" stroke="#84939d" stroke-width="0.600"/><path d="M1 13 L15 16 L20 13.200" stroke="#dfe7ec" fill="none"/><path d="M15 16 V24" stroke="#dfe7ec"/><path d="M6 12 Q9 9 12 12.500" stroke="#5a666e" fill="none"/><rect x="4" y="16" width="2" height="3" fill="#dfe7ec"/><rect x="10" y="17.500" width="2" height="3" fill="#dfe7ec"/></svg>
<svg style="left:370px;top:768px" width="22" height="23"><use href="#scrollbig"/></svg>
<svg style="left:377px;top:780px" width="17" height="13" viewBox="0 0 17 13"><path d="M0.500 5 L3 2.500 H14 L16.500 5 V11 L14 12.500 H0.500 Z" fill="#a9b9c3" stroke="#7d8d98" stroke-width="0.700"/><path d="M6 2.500 V1 H11 V2.500" fill="none" stroke="#6d7d88"/><path d="M0.500 6.500 H13.500 L16.500 5" stroke="#dbe4ea" fill="none"/><rect x="6.500" y="5.500" width="2" height="3" fill="#6d7d88"/></svg>
<div class="t" style="left:397px;top:771px;letter-spacing:-0.078px;color:#fff">Group Policy Mana...</div>
<div class="a" style="left:363px;top:798px;width:152px;height:2px;background:#76b9ed;"></div>
<div class="a" style="left:520px;top:760px;width:160px;height:40px;background:#35454f;"></div>
<svg style="left:531px;top:768px" width="22" height="23"><use href="#scrollbig"/></svg>
<div class="t" style="left:557.5px;top:771px;letter-spacing:-0.053px;color:#fff">Group Policy Mana...</div>
<div class="a" style="left:520px;top:798px;width:160px;height:2px;background:#76b9ed;"></div>
<svg style="left:1097px;top:776px" width="13" height="8" viewBox="0 0 13 8"><path d="M0.700 7 L6.500 1.200 L12.300 7" fill="none" stroke="#fff" stroke-width="1.300"/></svg>
<svg style="left:1119px;top:772px" width="17" height="17" viewBox="0 0 17 17"><circle cx="8" cy="8" r="7.300" fill="none" stroke="#fff" stroke-width="1.100"/><ellipse cx="8" cy="8" rx="3.300" ry="7.300" fill="none" stroke="#fff" stroke-width="1"/><path d="M0.700 8H15.300M2 4.300H14M2 11.700H14" stroke="#fff" stroke-width="0.900" fill="none"/><circle cx="12.500" cy="12.500" r="3.800" fill="#030a1c"/><circle cx="12.500" cy="12.500" r="2.900" fill="none" stroke="#fff" stroke-width="1"/><path d="M10.500 10.500L14.500 14.500" stroke="#fff" stroke-width="1"/></svg>
<svg style="left:1142px;top:773px" width="17" height="14" viewBox="0 0 17 14"><path d="M0.600 4.500 H3 L6.500 1 V13 L3 9.500 H0.600 Z" fill="none" stroke="#fff" stroke-width="1.100"/><path d="M10 4.500 L15 9.500 M15 4.500 L10 9.500" stroke="#fff" stroke-width="1.100"/></svg>
<div class="t" style="left:1172.5px;top:762px;letter-spacing:-0.004px;color:#fff">2:43 AM</div>
<div class="t" style="left:1166.5px;top:780px;letter-spacing:-0.306px;color:#fff">12/29/2021</div>
<svg style="left:1239px;top:772px" width="16" height="16" viewBox="0 0 16 16"><path d="M0.600 0.600 H15.400 V12 H10.500 L8 14.600 L5.500 12 H0.600 Z" fill="none" stroke="#fff" stroke-width="1.200"/></svg>
<div class="a" style="left:1275px;top:760px;width:1px;height:40px;background:#5a656d;"></div>
</body></html>
